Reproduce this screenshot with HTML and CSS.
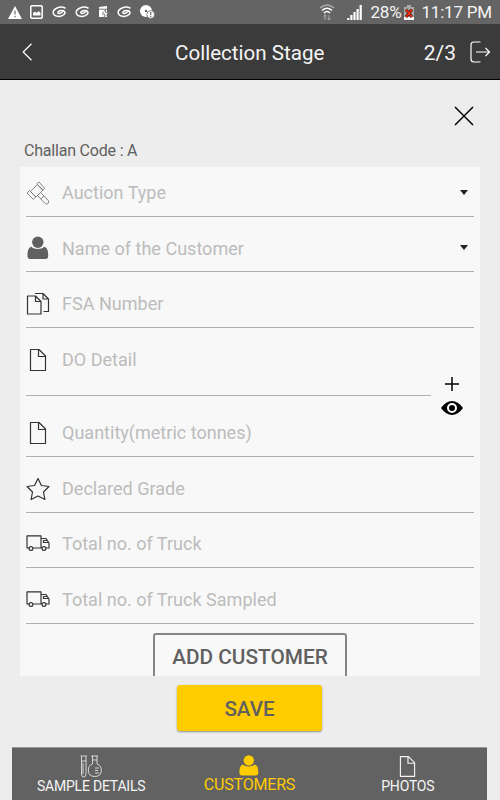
FILE: index.html
```html
<!DOCTYPE html>
<html lang="en">
<head>
  <meta charset="UTF-8" />
  <meta name="viewport" content="width=device-width, initial-scale=1.0" />
  <title>Collection Stage</title>
  <link rel="stylesheet" href="styles.css">
</head>
<body>
  <!-- shared icons -->
  <svg class="defs" width="0" height="0">
    <symbol id="swirl" viewBox="0 0 15 12">
      <path d="M13 2C8-.5 1 3 1.200 6.500C1.500 11 9 11.500 12 8.500C14 6.500 12.500 4.500 9.500 4.600C7 4.700 5.500 6 6 7C7 8 9.500 7 10.500 5.800" fill="none" stroke="#fff" stroke-width="1.500" stroke-linecap="round"/>
    </symbol>
    <symbol id="user" viewBox="0 0 22 24">
      <circle cx="10.800" cy="6.300" r="5.700"/>
      <path d="M4.500 10.800C6.500 13.700 15 13.700 17 10.800C20.500 11.700 21.200 15 21.200 20Q21.200 23 18.500 23H3.200Q.5 23 .5 20C.5 15 1.200 11.700 4.500 10.800Z"/>
    </symbol>
    <symbol id="file" viewBox="0 0 18 24">
      <path d="M1.500 1.500H10L16.500 8V22.500H1.500ZM9.500 1.500V8.500H16.500" fill="none" stroke="currentColor" stroke-width="1.200" stroke-linejoin="round"/>
    </symbol>
    <symbol id="truck" viewBox="0 0 24 17">
      <g fill="none" stroke="currentColor" stroke-width="1.200" stroke-linejoin="round">
        <path d="M3 13H1V.8H15V13M15 3.500H20L23 8V13H20M16 13H7M22.500 7.500H17.500V5.500H21"/>
        <circle cx="5" cy="13.500" r="1.900"/>
        <circle cx="18" cy="13.500" r="1.900"/>
      </g>
    </symbol>
  </svg>

  <div class="status">
    <div class="notices">
      <svg width="14" height="13" viewBox="0 0 14 13"><path d="M7 0L14 13H0Z" fill="#fff"/><path d="M7 4.500V8.500M7 9.800V11.300" stroke="#777" stroke-width="1.300"/></svg>
      <svg width="13" height="14" viewBox="0 0 13 14"><rect x=".8" y=".8" width="11.400" height="12.400" rx="1" fill="none" stroke="#fff" stroke-width="1.500"/><path d="M3 10.500V8L5 6.500L6.500 8L8.500 6L10.500 8V10.500Z" fill="#fff"/></svg>
      <svg width="15" height="12"><use href="#swirl"/></svg>
      <svg width="15" height="12"><use href="#swirl"/></svg>
      <svg width="11" height="12" viewBox="0 0 11 12"><path d="M1 1L9 0V11H1Z" fill="#fff"/><path d="M1 3.200H9" stroke="#777"/><path d="M7.500 3.500L4 8H6.500L6 11.500L10.500 6.500H7.500Z" fill="#fff" stroke="#777" stroke-width=".8"/></svg>
      <svg width="15" height="12"><use href="#swirl"/></svg>
      <svg width="15" height="14" viewBox="0 0 15 14"><circle cx="6" cy="6" r="6" fill="#fff"/><circle cx="6" cy="6" r="1.200" fill="#666"/><circle cx="10.700" cy="9.500" r="3.900" fill="#fff" stroke="#666" stroke-width=".8"/><path d="M10.700 7V10M10.700 10.800V12" stroke="#666" stroke-width="1.200"/></svg>
    </div>
    <div class="system">
      <svg class="wifi" width="16" height="17" viewBox="0 0 16 17"><g fill="none" stroke="#fff" stroke-width="1.600"><path d="M1 4Q8-2 15 4" stroke="#aaa"/><path d="M3 6.500Q8 2 13 6.500"/><path d="M5 9Q8 6 11 9"/></g><path d="M6 16V11M4.500 12.500L6 10.500L7.500 12.500M10 11V16M8.500 14L10 16L11.500 14" fill="none" stroke="#aaa"/></svg>
      <svg class="signal" width="15" height="15" viewBox="0 0 15 15"><path d="M1.300 15V13M4.400 15V10M7.500 15V7M10.600 15V4M13.700 15V0" stroke="#fff" stroke-width="2.200"/></svg>
      <span class="percent">28%</span>
      <svg class="battery" width="10" height="15" viewBox="0 0 10 15"><path d="M3 0H7V2H10V12H0V2H3Z" fill="#aaa"/><path d="M0 12H10V15H0Z" fill="#fff"/><path d="M2 4.500L8 12M8 4.500L2 12" stroke="#222" stroke-width="3"/><path d="M2 4.500L8 12M8 4.500L2 12" stroke="#f32a0c" stroke-width="2"/></svg>
      <span class="clock">11:17 PM</span>
    </div>
  </div>

  <div class="header">
    <svg class="back" width="11" height="18" viewBox="0 0 11 18"><path d="M9.500 .8L1.200 9L9.500 17.200" fill="none" stroke="#fff" stroke-width="1.200"/></svg>
    <h1>Collection Stage</h1>
    <span class="step">2/3</span>
    <svg width="21" height="22" viewBox="0 0 21 22"><path d="M10.500 1H4Q1 1 1 4V18Q1 21 4 21H10.500M6 11H19.500M15.500 7L19.500 11L15.500 15" fill="none" stroke="#fff" stroke-width="1.200"/></svg>
  </div>

  <div class="content">
    <div class="close">
      <svg width="20" height="20" viewBox="0 0 20 20"><path d="M1 1L19 19M19 1L1 19" stroke="#000" stroke-width="1.500"/></svg>
    </div>
    <p class="challan">Challan Code : A</p>

    <div class="card">
      <div class="field first">
        <span class="icon"><svg width="24" height="24" viewBox="0 0 24 24"><g fill="none" stroke="#777" stroke-width=".9" stroke-linejoin="round"><path d="M4.500 10.500L11.500 3.500L17 9L10 16Z"/><path d="M10.800 2.800L12.800 .8L18.600 7.300L16.600 9.300ZM1 12L3.500 9.500L9.800 16L7.300 18.300ZM11.500 14.500L14.500 11.500L22.300 19.500Q23.500 21 22 22.500Q20.500 23.800 19 22.300ZM15 18L18 15"/></g></svg></span>
        <span class="label">Auction Type</span>
        <span class="arrow"></span>
      </div>
      <div class="field">
        <span class="icon"><svg width="22" height="24" fill="#606060"><use href="#user"/></svg></span>
        <span class="label">Name of the Customer</span>
        <span class="arrow"></span>
      </div>
      <div class="field">
        <span class="icon"><svg width="24" height="24" viewBox="0 0 24 24"><g fill="none" stroke="currentColor" stroke-width="1.200" stroke-linejoin="round"><path d="M1.500 4H9.500L15 9.500V22H1.500ZM9.500 4V9.500H15"/><path d="M9 1.500H17L22.500 7V19.500H17.500M17 1.500V7H22.500"/></g></svg></span>
        <span class="label">FSA Number</span>
      </div>
      <div class="split">
        <div class="field do-detail">
          <span class="icon"><svg width="18" height="24"><use href="#file"/></svg></span>
          <span class="label">DO Detail</span>
        </div>
        <div class="actions">
          <svg width="14" height="14" viewBox="0 0 14 14"><path d="M7 0V14M0 7H14" stroke="#000" stroke-width="1.500"/></svg>
          <svg width="22" height="14" viewBox="0 0 22 14"><path d="M0 7Q5 0 11 0T22 7Q17 14 11 14T0 7Z"/><circle cx="11" cy="7" r="4" fill="none" stroke="#fff" stroke-width="2"/></svg>
        </div>
      </div>
      <div class="field quantity">
        <span class="icon"><svg width="18" height="24"><use href="#file"/></svg></span>
        <span class="label">Quantity(metric tonnes)</span>
      </div>
      <div class="field">
        <span class="icon"><svg width="24" height="24" viewBox="0 0 24 24"><path d="M12 1.500L15.400 8.500L23 9.500L17.500 15L18.900 22.500L12 19L5.100 22.500L6.500 15L1 9.500L8.600 8.500Z" fill="none" stroke="currentColor" stroke-width="1.200" stroke-linejoin="round"/></svg></span>
        <span class="label">Declared Grade</span>
      </div>
      <div class="field truck">
        <span class="icon"><svg width="24" height="17"><use href="#truck"/></svg></span>
        <span class="label">Total no. of Truck</span>
      </div>
      <div class="field">
        <span class="icon"><svg width="24" height="17"><use href="#truck"/></svg></span>
        <span class="label">Total no. of Truck Sampled</span>
      </div>
      <button class="add">ADD CUSTOMER</button>
    </div>
    <button class="save">SAVE</button>
  </div>

  <div class="tabs">
    <div class="tab">
      <svg width="22" height="23" viewBox="0 0 22 23"><g fill="none" stroke="#d5d5d5" stroke-width="1"><path d="M.5 1H7M1.500 1V19Q1.500 22 3.700 22T6 19V1M1.500 6H6M3 8V19M11 1H18M12.500 1V9Q8.300 10.500 8.300 15Q8.300 21.500 14.800 21.500Q21.300 21.500 21.300 15Q21.300 10.500 17 9V1M12.500 5H17M15 13H19M15 15.500H18M15 18H19"/></g></svg>
      <span>SAMPLE DETAILS</span>
    </div>
    <div class="tab active">
      <svg width="20" height="22" fill="#fc0"><use href="#user"/></svg>
      <span>CUSTOMERS</span>
    </div>
    <div class="tab">
      <svg width="17" height="22"><use href="#file"/></svg>
      <span>PHOTOS</span>
    </div>
  </div>
</body>
</html>
```
FILE: styles.css
```css
* { box-sizing: border-box; }
body { margin: 0; height: 800px; overflow: hidden; background: #ededed; font-family: Roboto, sans-serif; display: flex; flex-direction: column; }
svg { display: block; flex: none; }
.defs { position: absolute; }
button { font-family: inherit; font-weight: 500; color: #606060; padding: 0; }

.status { height: 24px; flex: none; background: #646464; display: flex; justify-content: space-between; align-items: center; padding: 0 8px; color: #f5f5f5; }
.notices, .system { display: flex; align-items: center; }
.notices { gap: 8px; }
.notices svg:nth-child(2) { margin-right: 1px; }
.system { font-size: 17px; letter-spacing: -0.2px; }
.wifi { margin-right: 12px; }
.signal { margin-right: 9px; }
.battery { margin: 0 7px 0 3px; }

.header { height: 56px; flex: none; background: #3b3b3b; border-bottom: 1px solid #000; display: flex; align-items: center; padding: 0 9px 0 22px; color: #f5f5f5; }
.header h1 { margin: 3px 0 0; font-size: 20.600px; font-weight: 400; flex: 1; padding-left: 142px; }
.step { font-size: 21px; margin: 3px 14px 0 0; }

.content { flex: 1; min-height: 0; padding: 0 20px; display: flex; flex-direction: column; }
.close { height: 46px; display: flex; justify-content: flex-end; align-items: flex-end; padding-right: 6px; flex: none; }
.challan { margin: 14px 4px 0; height: 27px; line-height: 21px; font-size: 16px; letter-spacing: -0.2px; color: #606060; flex: none; }

.card { height: 509px; flex: none; background: #f8f8f8; overflow: hidden; padding: 0 6px; color: #333; display: flex; flex-direction: column; }
.field { height: 56px; flex: none; border-bottom: 1px solid #b0b0b0; display: flex; align-items: flex-end; padding-bottom: 10px; }
.first { height: 50px; }
.first + .field, .truck { height: 55px; }
.icon { width: 24px; height: 27px; margin-right: 12px; display: flex; align-items: center; justify-content: center; }
.label { flex: 1; line-height: 26px; font-size: 18.050px; color: #bcbcbc; }
.first + .field .label { line-height: 24px; }
.arrow { border: 4.500px solid transparent; border-top: 5px solid #222; border-bottom: 0; margin: 0 6px 11px 0; }
.split { display: flex; height: 68px; flex: none; }
.do-detail { width: 405px; height: 68px; padding-bottom: 22px; }
.actions { flex: 1; display: flex; flex-direction: column; align-items: center; gap: 10px; padding: 49px 1px 0 0; }
.quantity { height: 61px; }
.add { width: 194px; height: 48px; flex: none; align-self: center; margin-top: 9px; border: 2px solid #858585; border-radius: 3px; background: none; font-size: 20.800px; }
.save { width: 145px; height: 46px; flex: none; align-self: center; margin: 9px 1px 0 0; border: 0; border-radius: 3px; background: #fc0; box-shadow: 0 1px 2px rgba(0,0,0,0.4); font-size: 20.600px; padding-top: 2px; }

.tabs { height: 53px; flex: none; margin: 0 13px 0 12px; background: #626262; border-top: 1px solid #999; display: flex; color: #f5f5f5; }
.tab { flex: 1; display: flex; flex-direction: column; align-items: center; padding-top: 7px; font-size: 14px; letter-spacing: -0.2px; line-height: 16px; }
.tab svg { height: 23px; }
.active { color: #fc0; font-size: 16px; padding-top: 6px; }
```
